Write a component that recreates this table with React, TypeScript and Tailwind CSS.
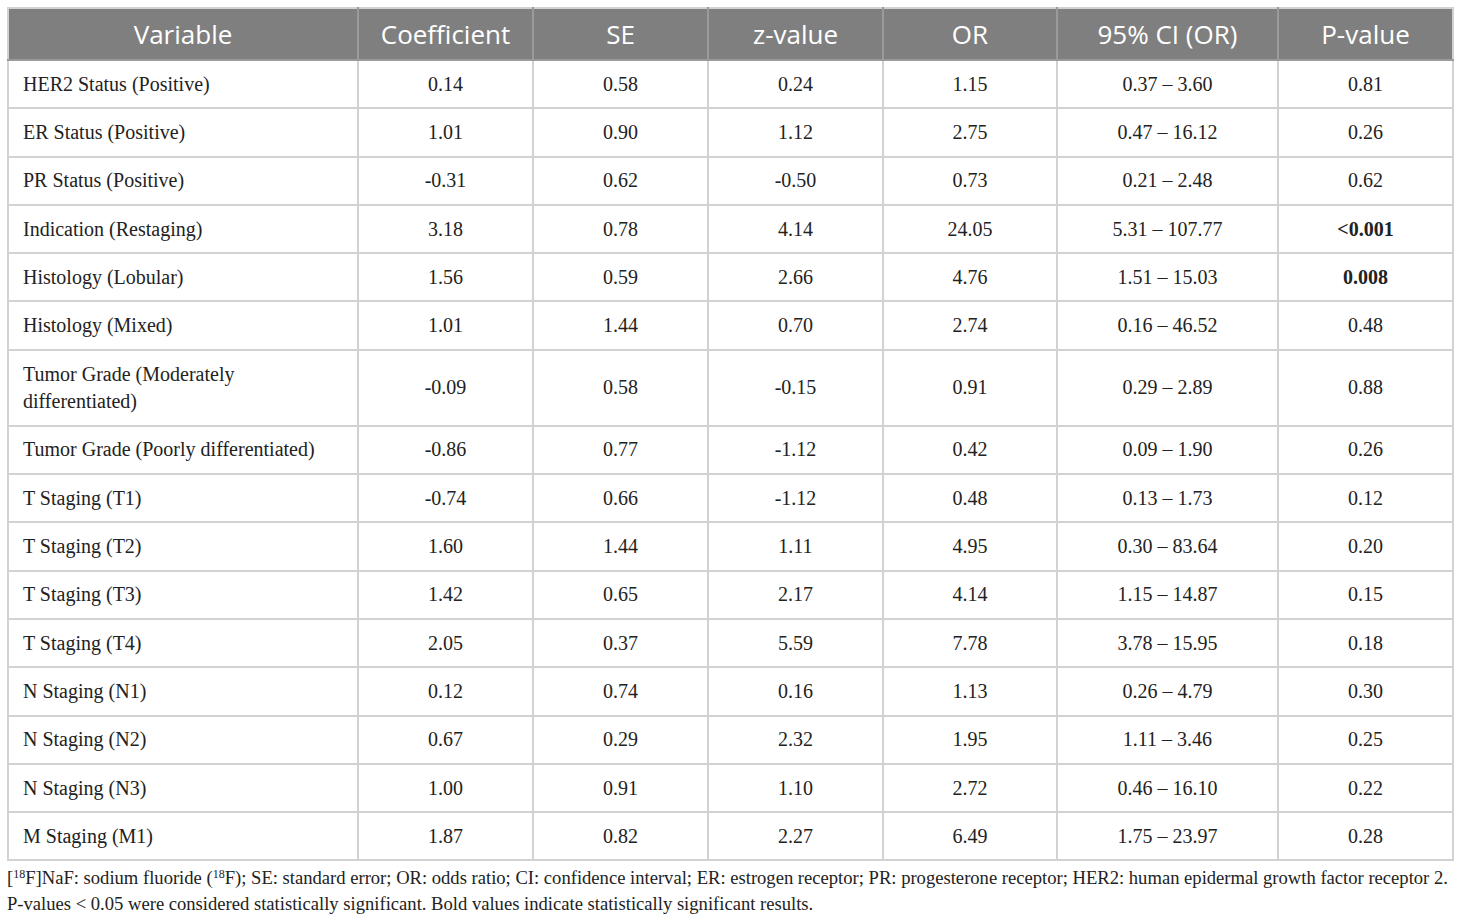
const headers = ["Variable", "Coefficient", "SE", "z-value", "OR", "95% CI (OR)", "P-value"];

type Row = { v: string; c: string; se: string; z: string; or: string; ci: string; p: string; bold?: boolean; tall?: boolean };

const rows: Row[] = [
  { v: "HER2 Status (Positive)", c: "0.14", se: "0.58", z: "0.24", or: "1.15", ci: "0.37 – 3.60", p: "0.81" },
  { v: "ER Status (Positive)", c: "1.01", se: "0.90", z: "1.12", or: "2.75", ci: "0.47 – 16.12", p: "0.26" },
  { v: "PR Status (Positive)", c: "-0.31", se: "0.62", z: "-0.50", or: "0.73", ci: "0.21 – 2.48", p: "0.62" },
  { v: "Indication (Restaging)", c: "3.18", se: "0.78", z: "4.14", or: "24.05", ci: "5.31 – 107.77", p: "<0.001", bold: true },
  { v: "Histology (Lobular)", c: "1.56", se: "0.59", z: "2.66", or: "4.76", ci: "1.51 – 15.03", p: "0.008", bold: true },
  { v: "Histology (Mixed)", c: "1.01", se: "1.44", z: "0.70", or: "2.74", ci: "0.16 – 46.52", p: "0.48" },
  { v: "Tumor Grade (Moderately differentiated)", c: "-0.09", se: "0.58", z: "-0.15", or: "0.91", ci: "0.29 – 2.89", p: "0.88", tall: true },
  { v: "Tumor Grade (Poorly differentiated)", c: "-0.86", se: "0.77", z: "-1.12", or: "0.42", ci: "0.09 – 1.90", p: "0.26" },
  { v: "T Staging (T1)", c: "-0.74", se: "0.66", z: "-1.12", or: "0.48", ci: "0.13 – 1.73", p: "0.12" },
  { v: "T Staging (T2)", c: "1.60", se: "1.44", z: "1.11", or: "4.95", ci: "0.30 – 83.64", p: "0.20" },
  { v: "T Staging (T3)", c: "1.42", se: "0.65", z: "2.17", or: "4.14", ci: "1.15 – 14.87", p: "0.15" },
  { v: "T Staging (T4)", c: "2.05", se: "0.37", z: "5.59", or: "7.78", ci: "3.78 – 15.95", p: "0.18" },
  { v: "N Staging (N1)", c: "0.12", se: "0.74", z: "0.16", or: "1.13", ci: "0.26 – 4.79", p: "0.30" },
  { v: "N Staging (N2)", c: "0.67", se: "0.29", z: "2.32", or: "1.95", ci: "1.11 – 3.46", p: "0.25" },
  { v: "N Staging (N3)", c: "1.00", se: "0.91", z: "1.10", or: "2.72", ci: "0.46 – 16.10", p: "0.22" },
  { v: "M Staging (M1)", c: "1.87", se: "0.82", z: "2.27", or: "6.49", ci: "1.75 – 23.97", p: "0.28" },
];

const serif = "font-['Liberation_Serif','Times_New_Roman',serif]";
const cell = "border-2 border-[#d2d2d2] px-[14px] py-[9px] text-center align-middle";

export default function App() {
  return (
    <div className="min-h-[921px] w-[1460px] bg-white px-[7px] pt-[7px] text-[#222]">
      <table className="w-full table-fixed border-collapse">
        <colgroup>
          <col className="w-[350px]" />
          <col className="w-[175px]" />
          <col className="w-[175px]" />
          <col className="w-[175px]" />
          <col className="w-[174px]" />
          <col className="w-[221px]" />
          <col className="w-[175px]" />
        </colgroup>
        <thead>
          <tr className="h-[52px] bg-[#7f7f7f]">
            {headers.map((h) => (
              <th
                key={h}
                className="border-2 border-[#9a9a9a] border-t-[#d2d2d2] first:border-l-[#d2d2d2] last:border-r-[#d2d2d2] px-2 py-0 text-center align-middle font-['Open_Sans',sans-serif] text-[26px] font-normal leading-[30px] text-white"
              >
                {h}
              </th>
            ))}
          </tr>
        </thead>
        <tbody className={`${serif} text-[20px] leading-[27px]`}>
          {rows.map((r) => (
            <tr key={r.v} className={r.tall ? "h-[76px]" : "h-[48.3px]"}>
              <td className={`${cell} !text-left`}>{r.v}</td>
              <td className={cell}>{r.c}</td>
              <td className={cell}>{r.se}</td>
              <td className={cell}>{r.z}</td>
              <td className={cell}>{r.or}</td>
              <td className={cell}>{r.ci}</td>
              <td className={`${cell} ${r.bold ? "font-bold" : ""}`}>{r.p}</td>
            </tr>
          ))}
        </tbody>
      </table>
      <div className={`${serif} mt-[4px] text-[18.6px] leading-[26px] text-[#222]`}>
        <p className="whitespace-nowrap">
          [<sup className="text-[12px]">18</sup>F]NaF: sodium fluoride (<sup className="text-[12px]">18</sup>F); SE: standard error; OR: odds ratio; CI: confidence interval; ER: estrogen receptor; PR: progesterone receptor; HER2: human epidermal growth factor receptor 2.
        </p>
        <p className="whitespace-nowrap">
          P-values &lt; 0.05 were considered statistically significant. Bold values indicate statistically significant results.
        </p>
      </div>
    </div>
  );
}
